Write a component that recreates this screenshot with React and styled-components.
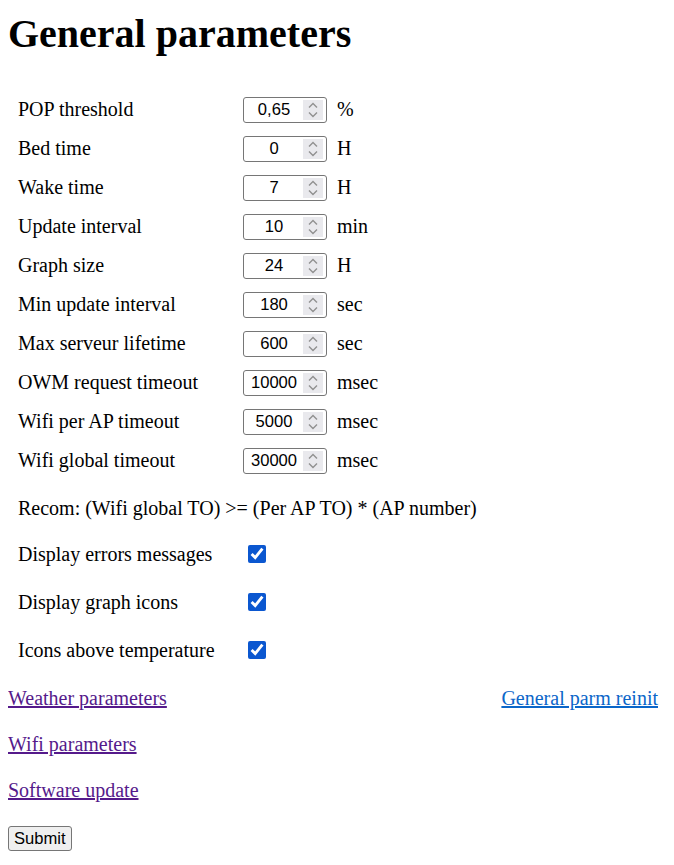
import React from 'react'
import styled, { createGlobalStyle } from 'styled-components'

const GlobalStyle = createGlobalStyle`
  body {
    margin: 8px;
    font-family: "Liberation Serif", "Times New Roman", serif;
    font-size: 20px;
    color: #000;
    background: #fff;
  }
`

const Title = styled.h1`
  font-size: 40px;
  font-weight: bold;
  line-height: 46px;
  margin: 3px 0 33px;
`

const Params = styled.div`
  display: flex;
  flex-direction: column;
  padding-left: 10px;
  margin-bottom: 1px;
`

const Row = styled.div`
  display: flex;
  align-items: center;
  height: ${p => p.h || 39}px;
`

const Note = styled(Row)`
  margin-top: 6px;
`

const Label = styled.span`
  width: 225px;
  flex-shrink: 0;
`

const Field = styled.div`
  display: flex;
  align-items: stretch;
  width: 84px;
  height: 26px;
  box-sizing: border-box;
  border: 1px solid #767676;
  border-radius: 3px;
  padding: 2px 3px 2px 1px;
  background: #fff;
`

const NumInput = styled.input`
  flex: 1;
  min-width: 0;
  border: none;
  outline: none;
  padding: 0;
  text-align: center;
  font-family: "Liberation Sans", Arial, sans-serif;
  font-size: 16.6px;
  color: #000;
  background: transparent;
`

const Spinner = styled.span`
  width: 20px;
  background: #e9e9ed;
  display: flex;
  align-items: center;
  justify-content: center;
`

const Unit = styled.span`
  margin-left: 10px;
`

const Check = styled.input`
  width: 18px;
  height: 18px;
  margin: 0 0 0 5px;
  accent-color: #0b57d0;
`

const LinkRow = styled.div`
  display: flex;
  justify-content: space-between;
  align-items: center;
  height: 46px;
  padding-right: 8px;
`

const Link = styled.a`
  color: ${p => (p.visited ? '#551a8b' : '#0b66c9')};
  text-decoration: underline;
`

const SubmitButton = styled.button`
  margin-top: 13px;
  height: 25px;
  padding: 0 5px;
  font-family: "Liberation Sans", Arial, sans-serif;
  font-size: 16.6px;
  color: #000;
  background: #efefef;
  border: 1px solid #767676;
  border-radius: 3px;
`

const params = [
  ['POP threshold', '0,65', '%'],
  ['Bed time', '0', 'H'],
  ['Wake time', '7', 'H'],
  ['Update interval', '10', 'min'],
  ['Graph size', '24', 'H'],
  ['Min update interval', '180', 'sec'],
  ['Max serveur lifetime', '600', 'sec'],
  ['OWM request timeout', '10000', 'msec'],
  ['Wifi per AP timeout', '5000', 'msec'],
  ['Wifi global timeout', '30000', 'msec'],
]

const checks = ['Display errors messages', 'Display graph icons', 'Icons above temperature']

function SpinIcon() {
  return (
    <svg width="12" height="20" viewBox="0 0 12 20">
      <path d="M2 7.5 L6 3.5 L10 7.5" fill="none" stroke="#909090" strokeWidth="1.4" />
      <path d="M2 12.5 L6 16.5 L10 12.5" fill="none" stroke="#909090" strokeWidth="1.4" />
    </svg>
  )
}

export default function App() {
  return (
    <>
      <GlobalStyle />
      <Title>General parameters</Title>
      <Params>
        {params.map(([label, value, unit]) => (
          <Row key={label}>
            <Label>{label}</Label>
            <Field>
              <NumInput type="text" defaultValue={value} />
              <Spinner><SpinIcon /></Spinner>
            </Field>
            <Unit>{unit}</Unit>
          </Row>
        ))}
        <Note h={44}>
          Recom: (Wifi global TO) &gt;= (Per AP TO) * (AP number)
        </Note>
        {checks.map(label => (
          <Row key={label} h={48}>
            <Label>{label}</Label>
            <Check type="checkbox" defaultChecked />
          </Row>
        ))}
      </Params>
      <LinkRow>
        <Link href="#weather" visited>Weather parameters</Link>
        <Link href="#reinit">General parm reinit</Link>
      </LinkRow>
      <LinkRow>
        <Link href="#wifi" visited>Wifi parameters</Link>
      </LinkRow>
      <LinkRow>
        <Link href="#update" visited>Software update</Link>
      </LinkRow>
      <SubmitButton type="submit">Submit</SubmitButton>
    </>
  )
}
